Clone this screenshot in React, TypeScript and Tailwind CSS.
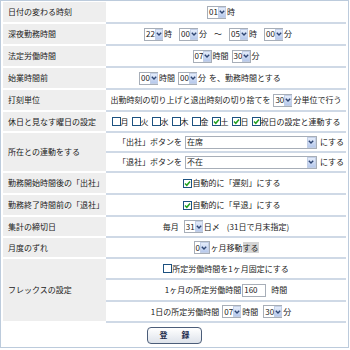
import React from "react";

const FONT = { fontFamily: '"Noto Sans CJK JP", "Liberation Sans", sans-serif' };

function Sel({ v, w = "w-[19px]" }: { v: string; w?: string }) {
  return (
    <span className={`inline-flex h-[13px] items-stretch border border-[#a7aeb8] bg-white ${w}`}>
      <span className="flex flex-1 items-center pl-[1px] text-[8px] leading-none text-[#222]">{v}</span>
      <span className="flex w-[9px] items-center justify-center border border-[#c3cfe6] bg-gradient-to-b from-[#e4ecfa] to-[#b7c9ec]">
        <svg width="6" height="4" viewBox="0 0 6 4">
          <path d="M0.8 0.8 L3 3 L5.2 0.8" fill="none" stroke="#2f4673" strokeWidth="1.4" />
        </svg>
      </span>
    </span>
  );
}

function Chk({ on = false }: { on?: boolean }) {
  return (
    <span className="inline-flex h-[9px] w-[9px] shrink-0 items-center justify-center border border-[#1c5180] bg-white">
      {on && (
        <svg width="7" height="7" viewBox="0 0 7 7">
          <path d="M1 3.5 L2.8 5.3 L6 1.5" fill="none" stroke="#21a121" strokeWidth="1.5" />
        </svg>
      )}
    </span>
  );
}

function Label({ children, h }: { children: React.ReactNode; h: string }) {
  return (
    <div className={`flex w-[103px] shrink-0 items-center border-b-2 border-white bg-[#eeeeee] pl-[5px] ${h}`}>
      {children}
    </div>
  );
}

function Cell({ children, h, cls = "", gap = "gap-[1px]" }: { children: React.ReactNode; h: string; cls?: string; gap?: string }) {
  return (
    <div className={`flex items-center justify-center border-b-2 border-[#cfd9e6] ${h} ${cls}`}>
      <div className={`flex items-center whitespace-nowrap ${gap}`}>{children}</div>
    </div>
  );
}

function Row({ label, h, children, cls, gap }: { label: string; h: string; children: React.ReactNode; cls?: string; gap?: string }) {
  return (
    <div className="flex">
      <Label h={h}>{label}</Label>
      <div className="flex-1">
        <Cell h={h} cls={cls} gap={gap}>
          {children}
        </Cell>
      </div>
    </div>
  );
}

export default function App() {
  return (
    <div style={FONT} className="h-[348px] w-[349px] border border-[#bccbdc] bg-white px-[2px] pt-[1px] text-[8px] leading-none text-[#222]">
      <Row label="日付の変わる時刻" h="h-[22px]" cls="pr-[10px]">
        <Sel v="01" />
        <span>時</span>
      </Row>
      <Row label="深夜勤務時間" h="h-[22px]" cls="pr-[16px]">
        <Sel v="22" />
        <span className="mr-[6px]">時</span>
        <Sel v="00" />
        <span>分</span>
        <span className="mx-[6px]">〜</span>
        <Sel v="05" />
        <span className="mr-[6px]">時</span>
        <Sel v="00" />
        <span>分</span>
      </Row>
      <Row label="法定労働時間" h="h-[22px]">
        <Sel v="07" />
        <span className="mr-[2px]">時間</span>
        <Sel v="30" />
        <span>分</span>
      </Row>
      <Row label="始業時間前" h="h-[22px]" cls="pr-[32px]">
        <Sel v="00" />
        <span className="mr-[2px]">時間</span>
        <Sel v="00" />
        <span>分</span>
        <span className="ml-[2px]">を、勤務時間とする</span>
      </Row>
      <Row label="打刻単位" h="h-[22px]">
        <span className="mr-[2px]">出勤時刻の切り上げと退出時刻の切り捨てを</span>
        <Sel v="30" />
        <span>分単位で行う</span>
      </Row>
      <Row label="休日と見なす曜日の設定" h="h-[21px]" gap="gap-0">
        {[
          ["月", false],
          ["火", false],
          ["水", false],
          ["木", false],
          ["金", false],
          ["土", true],
          ["日", true],
        ].map(([d, on]) => (
          <span key={d as string} className="mr-[3px] flex items-center">
            <Chk on={on as boolean} />
            <span>{d as string}</span>
          </span>
        ))}
        <Chk on />
        <span>祝日の設定と連動する</span>
      </Row>

      <div className="flex">
        <Label h="h-[40px]">所在との連動をする</Label>
        <div className="flex-1">
          <Cell h="h-[20px]" cls="pl-[10px]">
            <span className="mr-[2px]">「出社」ボタンを</span>
            <Sel v="在席" w="w-[132px]" />
            <span className="ml-[2px]">にする</span>
          </Cell>
          <Cell h="h-[20px]" cls="pl-[10px]">
            <span className="mr-[2px]">「退社」ボタンを</span>
            <Sel v="不在" w="w-[132px]" />
            <span className="ml-[2px]">にする</span>
          </Cell>
        </div>
      </div>

      <Row label="勤務開始時間後の「出社」" h="h-[22px]" cls="pl-[12px]" gap="gap-0">
        <Chk on />
        <span>自動的に「遅刻」にする</span>
      </Row>
      <Row label="勤務終了時間前の「退社」" h="h-[22px]" cls="pl-[12px]" gap="gap-0">
        <Chk on />
        <span>自動的に「早退」にする</span>
      </Row>
      <Row label="集計の締切日" h="h-[21px]">
        <span className="mr-[4px]">毎月</span>
        <Sel v="31" />
        <span>日〆</span>
        <span className="ml-[6px]">(31日で月末指定)</span>
      </Row>
      <Row label="月度のずれ" h="h-[21px]">
        <Sel v="0" w="w-[16px]" />
        <span>
          ヶ月移動<span className="bg-[#d4d4d4]">する</span>
        </span>
      </Row>

      <div className="flex">
        <Label h="h-[64px]">フレックスの設定</Label>
        <div className="flex-1">
          <Cell h="h-[21px]" gap="gap-0">
            <Chk />
            <span>所定労働時間を1ヶ月固定にする</span>
          </Cell>
          <Cell h="h-[22px]">
            <span>1ヶ月の所定労働時間</span>
            <span className="flex h-[13px] w-[24px] items-center border border-[#a7aeb8] bg-white pl-[1px]">160</span>
            <span className="ml-[4px]">時間</span>
          </Cell>
          <Cell h="h-[21px]" cls="pr-[10px]">
            <span className="mr-[2px]">1日の所定労働時間</span>
            <Sel v="07" />
            <span className="mr-[4px]">時間</span>
            <Sel v="30" />
            <span>分</span>
          </Cell>
        </div>
      </div>

      <div className="flex h-[24px] items-center justify-center">
        <button className="flex h-[17px] w-[55px] items-center justify-center gap-[14px] rounded-[4px] border-[1.5px] border-[#4b5d79] bg-gradient-to-b from-white to-[#dde2ea] text-[8px] font-bold text-[#1b2a4a]">
          <span>登</span>
          <span>録</span>
        </button>
      </div>
    </div>
  );
}
